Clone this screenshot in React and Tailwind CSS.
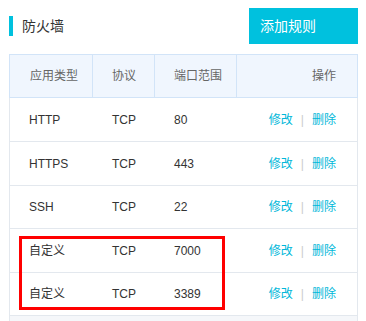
import React from "react";

const rows = [
    { id: 1, type: "HTTP", proto: "TCP", port: "80", h: "h-[44px]" },
    { id: 2, type: "HTTPS", proto: "TCP", port: "443", h: "h-[44px]" },
    { id: 3, type: "SSH", proto: "TCP", port: "22", h: "h-[43px]" },
    { id: 4, type: "自定义", proto: "TCP", port: "7000", h: "h-[44px]" },
    { id: 5, type: "自定义", proto: "TCP", port: "3389", h: "h-[43px]" },
];

const font = { fontFamily: '"Liberation Sans", "Noto Sans CJK SC", sans-serif' };

function App() {
    return (
        <div className="relative w-[366px] h-[321px] bg-white overflow-hidden text-[#333]" style={font}>
            {/* title + button */}
            <div className="flex items-center justify-between pl-[9px] pr-[8px] pt-[8px]">
                <div className="flex items-center gap-[9px]">
                    <span className="block w-[4px] h-[20px] bg-[#00c1de]" />
                    <h1 className="text-[14px] leading-none text-[#333]">防火墙</h1>
                </div>
                <button className="w-[109px] h-[36px] bg-[#00c1de] text-white text-[14px] text-left pl-[11px]">
                    添加规则
                </button>
            </div>

            {/* table */}
            <div className="ml-[9px] mt-[10px] w-[349px]">
                <div className="flex h-[44px] bg-[#f0f6fe] border border-[#d2e4f8] text-[12px] text-[#666] items-stretch">
                    <div className="w-[83px] border-r border-[#d2e4f8] flex items-center pl-[20px]">应用类型</div>
                    <div className="w-[62px] border-r border-[#d2e4f8] flex items-center pl-[19px]">协议</div>
                    <div className="w-[82px] border-r border-[#d2e4f8] flex items-center pl-[19px]">端口范围</div>
                    <div className="flex-1 flex items-center justify-end pr-[21px]">操作</div>
                </div>

                {rows.map((r) => (
                    <div key={r.id} className={`${r.h} flex items-center border-x border-b border-[#e3e8ee] text-[12px]`}>
                        <div className="w-[83px] pl-[19px]">{r.type}</div>
                        <div className="w-[62px] pl-[19px]">{r.proto}</div>
                        <div className="w-[82px] pl-[19px]">{r.port}</div>
                        <div className="flex-1 flex items-center justify-end pr-[21px] text-[#00b7d9]">
                            <a className="cursor-pointer">修改</a>
                            <span className="mx-[8px] text-[#ccc]">|</span>
                            <a className="cursor-pointer">删除</a>
                        </div>
                    </div>
                ))}

                <div className="h-[10px] bg-[#f5f7fa] border-x border-[#e3e8ee]" />
            </div>

            {/* highlight box */}
            <div className="absolute left-[19px] top-[236px] w-[206px] h-[74px] border-[3px] border-[#ff0000]" />
        </div>
    );
}

export default App;
